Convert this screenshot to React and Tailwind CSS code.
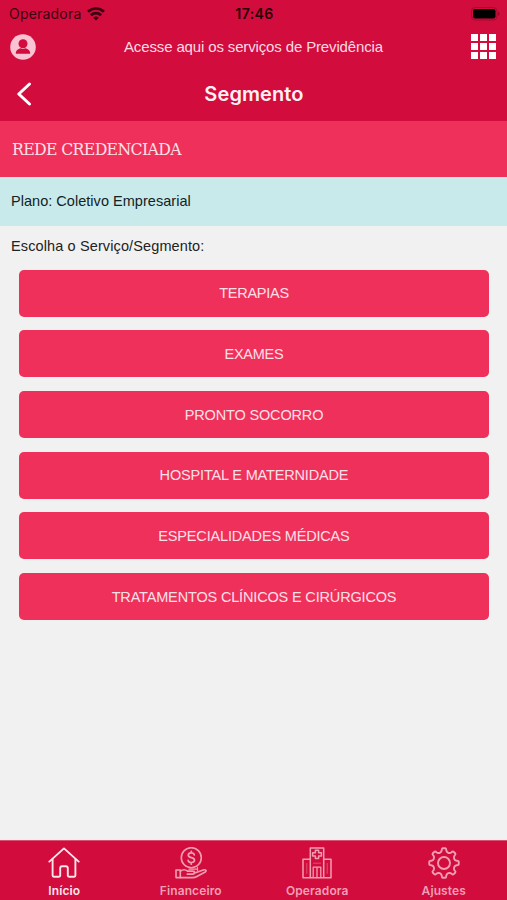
import React from "react";

const services = [
  { label: "TERAPIAS", tracking: "tracking-[-0.25px]" },
  { label: "EXAMES", tracking: "tracking-[-0.25px]" },
  { label: "PRONTO SOCORRO", tracking: "tracking-[-0.15px]" },
  { label: "HOSPITAL E MATERNIDADE", tracking: "tracking-[-0.16px]" },
  { label: "ESPECIALIDADES MÉDICAS", tracking: "tracking-[-0.17px]" },
  { label: "TRATAMENTOS CLÍNICOS E CIRÚRGICOS", tracking: "tracking-[-0.16px]" },
];

const WifiIcon = () => (
  <svg width="18" height="14" viewBox="0 0 18 14" fill="none" stroke="currentColor" strokeWidth="2.7">
    <path d="M1 4.8a11.4 11.4 0 0 1 16 0" />
    <path d="M3.9 8.2a7.3 7.3 0 0 1 10.2 0" />
    <path d="M9 13.6 6.2 10.7a4.3 4.3 0 0 1 5.6 0Z" fill="currentColor" stroke="none" />
  </svg>
);

const BatteryIcon = () => (
  <svg width="29" height="14" viewBox="0 0 29 14">
    <rect x="0.5" y="0.5" width="25.5" height="12.5" rx="3.8" fill="none" stroke="#a00a31" />
    <rect x="2" y="2" width="22.5" height="9.5" rx="2.2" fill="#000" />
    <path d="M27.2 4.7c1.7.7 1.7 3.4 0 4.1Z" fill="#850827" />
  </svg>
);

const UserIcon = () => (
  <svg width="26" height="26" viewBox="0 0 26 26">
    <circle cx="13" cy="13" r="12.8" fill="#f9c3d3" />
    <circle cx="13" cy="9.8" r="4.5" fill="#d20c3d" />
    <path d="M5.8 19.8c0-3.6 2-4.800 5-5.600q2.200 1.500 4.400 0c3 .8 5 2 5 5.600Z" fill="#d20c3d" />
  </svg>
);

const GridIcon = () => (
  <div className="grid grid-cols-3 gap-[2px]">
    {[...Array(9)].map((_, i) => (
      <span key={i} className="h-[7px] w-[7px] bg-white"></span>
    ))}
  </div>
);

const HomeIcon = () => (
  <svg width="32" height="32" viewBox="0 0 32 32" fill="none" stroke="currentColor" strokeWidth="1.9" strokeLinecap="round" strokeLinejoin="round">
    <path d="M1.3 14.6 16 1.4l14.7 13.2" />
    <path d="M4.6 12v16.6q0 1.2 1.2 1.2h5.2q1.200 0 1.200-1.200v-7.300q0-2 2-2h3.600q2 0 2 2v7.300q0 1.200 1.200 1.200h5.200q1.200 0 1.200-1.200V12" />
  </svg>
);

const MoneyIcon = () => (
  <svg width="32" height="32" viewBox="0 0 32 32" fill="none" stroke="currentColor" strokeWidth="1.6" strokeLinecap="round" strokeLinejoin="round">
    <circle cx="16.3" cy="10.7" r="10" />
    <path d="M19.3 7.9c-.3-1.3-1.4-2-3-2-1.8 0-3 .9-3 2.4 0 3.2 6.2 1.5 6.2 4.8 0 1.5-1.3 2.4-3.2 2.4s-3-.8-3.2-2.200M16.3 4.300v1.600M16.300 15.500v1.700" strokeWidth="1.7" />
    <path d="M1 23h4.3v7.6H1Z" />
    <path d="M5.3 24.3c2.2-1.8 5.2-1.800 7.200-.2h5.200c2.600 0 2.600 3 0 3h-5.500M19 26.300l10-3.500c1.900-.5 2.800 1.100 1.200 2.200l-8.300 4.500q-2 1.100-4.400 1.100H5.300" />
    <path d="M14 22.200h8.500M22.500 20.500v3.200" strokeWidth="1.2" />
  </svg>
);

const HospitalIcon = () => (
  <svg width="30" height="32" viewBox="0 0 30 32" fill="none" stroke="currentColor" strokeWidth="1.5" strokeLinejoin="round">
    <path d="M8.300 30.800V1h13.400v29.800M8.300 12.300H1v18.500h28V12.300h-7.300" />
    <path d="M13.400 3.300h3.200v2.400h2.800v3.400h-2.800v2.400h-3.200V9.100h-2.800V5.700h2.800Z" />
    <path d="M11.200 30.800V20.200h7.600v10.600M15 20.200v10.600" strokeWidth="1.3" />
    <path d="M11 16.200h8M4.800 16v11M25.200 16v11" strokeWidth="1" opacity="0.45" />
  </svg>
);

// Outline of an eight-tooth cog, rounded tips joined by rounded valleys, first tooth at the top
const cogPath = (() => {
  const at = (r, deg) => {
    const a = (deg * Math.PI) / 180;
    return `${(16 + r * Math.cos(a)).toFixed(2)} ${(16 + r * Math.sin(a)).toFixed(2)}`;
  };
  let d = `M${at(14.8, -95)}`;
  for (let i = 0; i < 8; i++) {
    const c = i * 45 - 90;
    d += `L${at(14.8, c + 5)}Q${at(14.8, c + 9)} ${at(12.9, c + 10)}`;
    d += `C${at(10.6, c + 15)} ${at(10.6, c + 30)} ${at(12.9, c + 35)}`;
    d += `Q${at(14.8, c + 36)} ${at(14.8, c + 40)}`;
  }
  return d + "Z";
})();

const CogIcon = () => (
  <svg width="32" height="32" viewBox="0 0 32 32" fill="none" stroke="currentColor" strokeWidth="1.9" strokeLinejoin="round">
    <path d={cogPath} />
    <circle cx="16" cy="16" r="6" />
  </svg>
);

const tabs = [
  { label: "Início", Icon: HomeIcon, color: "text-[#fce6ec]" },
  { label: "Financeiro", Icon: MoneyIcon, color: "text-[#f09fb3]" },
  { label: "Operadora", Icon: HospitalIcon, color: "text-[#f09fb3]" },
  { label: "Ajustes", Icon: CogIcon, color: "text-[#f09fb3]" },
];

const App = () => {
  return (
    <div className="flex h-[900px] w-[507px] flex-col overflow-hidden bg-[#f1f1f1] font-['Liberation_Sans',sans-serif]">
      <header className="h-[121px] shrink-0 bg-[#d20c3d]">
        <div className="grid h-[27px] grid-cols-3 items-center pl-[9px] pr-[7px] text-[#3c0311] font-['Inter',sans-serif]">
          <div className="flex items-center gap-1.5">
            <span className="text-[14px] leading-none tracking-[0.2px]">Operadora</span>
            <WifiIcon />
          </div>
          <span className="text-center text-[14px] font-semibold leading-none tracking-[0.4px] text-[#250009]">17:46</span>
          <div className="flex justify-end">
            <BatteryIcon />
          </div>
        </div>
        <div className="flex h-[39px] items-center justify-between pl-[10px] pr-[11px]">
          <UserIcon />
          <a className="text-[15px] leading-none tracking-[-0.14px] text-[#fbdbe3]">Acesse aqui os serviços de Previdência</a>
          <GridIcon />
        </div>
        <div className="grid h-[55px] grid-cols-[60px_1fr_60px] items-center">
          <svg className="ml-4" width="16" height="24" viewBox="0 0 16 24" fill="none" stroke="#fff" strokeWidth="3" strokeLinecap="round" strokeLinejoin="round">
            <path d="M13.5 2 2.800 12l10.700 10" />
          </svg>
          <h1 className="pl-px text-center text-[20px] font-semibold leading-none tracking-[0.1px] text-[#fff0f4] font-['Inter',sans-serif]">Segmento</h1>
        </div>
      </header>

      <div className="flex h-14 shrink-0 items-center bg-[#ee305b] pl-3">
        <h2 className="whitespace-nowrap pt-[2px] text-[17.5px] leading-none tracking-[-0.65px] text-[#fde0e7] font-['DejaVu_Serif_Condensed','DejaVu_Serif',serif]">
          REDE CREDENCIADA
        </h2>
      </div>
      <div className="flex h-[49px] shrink-0 items-center bg-[#c8eaeb] pl-[11px] text-[14.5px] tracking-[0.03px] text-[#132224]">
        Plano: Coletivo Empresarial
      </div>

      <main className="flex flex-1 flex-col pl-[19px] pr-[18px]">
        <p className="-ml-2 pt-[12px] text-[14.5px] leading-4 tracking-[0.12px] text-[#222]">Escolha o Serviço/Segmento:</p>
        <div className="mt-[15.5px] flex flex-col gap-[13.7px]">
          {services.map((s) => (
            <button
              key={s.label}
              className={`h-[47px] w-full rounded-[5px] bg-[#ee305b] pt-[2px] text-[14.5px] text-[#fde0e7] ${s.tracking}`}
            >
              {s.label}
            </button>
          ))}
        </div>
      </main>

      <nav className="grid h-[60px] shrink-0 grid-cols-4 border-t border-[#dc5070] bg-[#d20c3d] pl-px pt-[6px] font-['Inter',sans-serif]">
        {tabs.map(({ label, Icon, color }) => (
          <a key={label} className={`flex flex-col items-center gap-[6px] ${color}`}>
            <Icon />
            <span className="text-[12px] font-semibold leading-3 tracking-[0.1px]">{label}</span>
          </a>
        ))}
      </nav>
    </div>
  );
};

export default App;
